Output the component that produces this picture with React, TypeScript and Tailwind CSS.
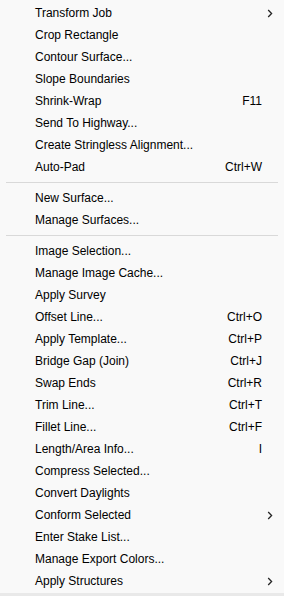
import React from "react";

type Item = { label: string; shortcut?: string; sub?: boolean } | "sep";

const items: Item[] = [
  { label: "Transform Job", sub: true },
  { label: "Crop Rectangle" },
  { label: "Contour Surface..." },
  { label: "Slope Boundaries" },
  { label: "Shrink-Wrap", shortcut: "F11" },
  { label: "Send To Highway..." },
  { label: "Create Stringless Alignment..." },
  { label: "Auto-Pad", shortcut: "Ctrl+W" },
  "sep",
  { label: "New Surface..." },
  { label: "Manage Surfaces..." },
  "sep",
  { label: "Image Selection..." },
  { label: "Manage Image Cache..." },
  { label: "Apply Survey" },
  { label: "Offset Line...", shortcut: "Ctrl+O" },
  { label: "Apply Template...", shortcut: "Ctrl+P" },
  { label: "Bridge Gap (Join)", shortcut: "Ctrl+J" },
  { label: "Swap Ends", shortcut: "Ctrl+R" },
  { label: "Trim Line...", shortcut: "Ctrl+T" },
  { label: "Fillet Line...", shortcut: "Ctrl+F" },
  { label: "Length/Area Info...", shortcut: "I" },
  { label: "Compress Selected..." },
  { label: "Convert Daylights" },
  { label: "Conform Selected", sub: true },
  { label: "Enter Stake List..." },
  { label: "Manage Export Colors..." },
  { label: "Apply Structures", sub: true },
];

function Chevron() {
  return (
    <svg width="6" height="9" viewBox="0 0 6 9" className="block">
      <path d="M1.2 1 L4.6 4.5 L1.2 8" fill="none" stroke="#262626" strokeWidth="1.3" />
    </svg>
  );
}

export default function App() {
  return (
    <div
      className="w-[284px] h-[596px] bg-[#f9f9f9] flex flex-col overflow-hidden text-[12px] text-black"
      style={{ fontFamily: '"Liberation Sans", Arial, sans-serif' }}
    >
      <div className="flex flex-col pt-[2px] pb-px">
        {items.map((it, i) =>
          it === "sep" ? (
            <div key={i} className="h-[9px] flex items-center pl-[6px] pr-[6px]">
              <div className="h-px flex-1 bg-[#d9d9d9]" />
            </div>
          ) : (
            <div key={i} className="h-[22px] flex items-center pl-[35px]">
              <span className="flex-1 whitespace-nowrap">{it.label}</span>
              {it.shortcut && <span className="whitespace-nowrap text-right">{it.shortcut}</span>}
              <span className="w-[22px] flex items-center pl-[5px]">{it.sub && <Chevron />}</span>
            </div>
          )
        )}
      </div>
      <div className="flex-1 bg-[#e9e9e9]" />
    </div>
  );
}
